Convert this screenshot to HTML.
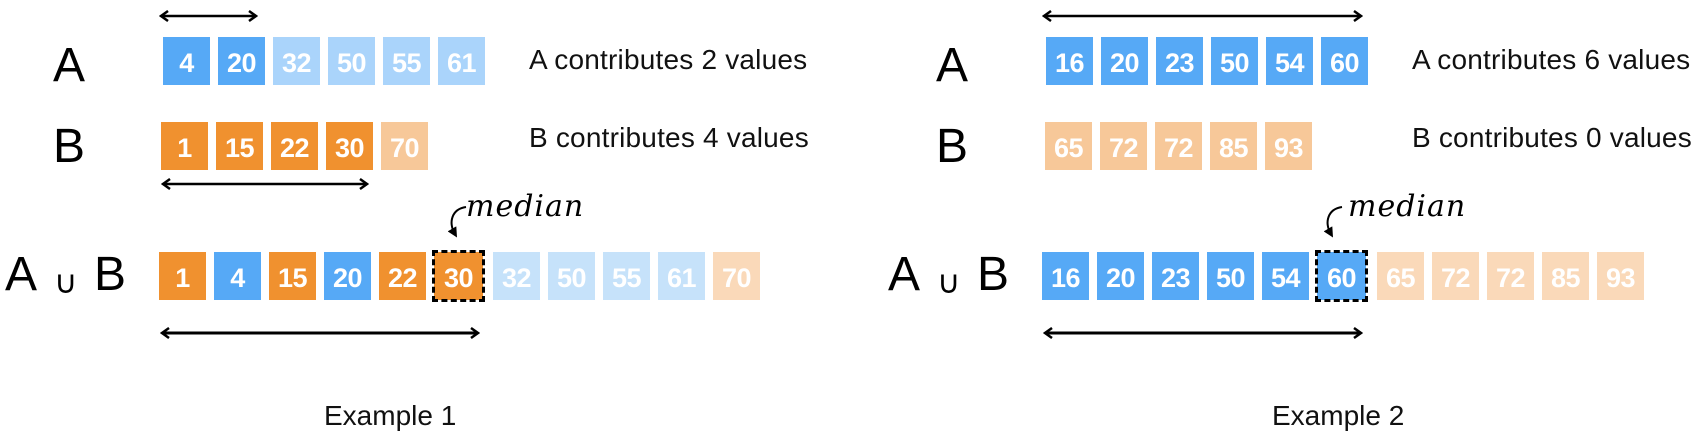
<!DOCTYPE html>
<html><head><meta charset="utf-8"><style>
html,body{margin:0;padding:0;background:#fff;}
body{width:1700px;height:438px;position:relative;overflow:hidden;font-family:"Liberation Sans",sans-serif;}
.b{position:absolute;width:47px;height:48px;color:#fff;font-weight:bold;font-size:27px;line-height:52px;text-align:center;letter-spacing:-0.5px;}
.d{background:#56a9f6}.ld{background:#aad4fb}.lld{background:#c6e2fa}
.o{background:#f0912f}.lo{background:#f7c899}.llo{background:#fad9b9}
.dash{outline:3px dashed #000;outline-offset:-1px;width:49px;}
.lab{position:absolute;font-size:48px;font-weight:normal;color:#000;line-height:1;}
.cup{position:absolute;font-size:32px;line-height:1;}
.txt{position:absolute;font-size:28px;color:#111;line-height:1;letter-spacing:0.2px;}
.med{position:absolute;font-family:"DejaVu Serif",serif;font-style:italic;font-size:30px;line-height:1;letter-spacing:1px;}
.ex{position:absolute;font-size:28px;color:#111;line-height:1;}
svg{position:absolute;left:0;top:0;}
</style></head><body>
<svg width="1700" height="438">
<defs><marker id="h" markerWidth="10" markerHeight="12" refX="8" refY="6" orient="auto-start-reverse" markerUnits="userSpaceOnUse"><path d="M1,1 L8,6 L1,11" fill="none" stroke="#000" stroke-width="2.5"/></marker>
<marker id="t" markerWidth="12" markerHeight="12" refX="6" refY="6" orient="auto" markerUnits="userSpaceOnUse"><path d="M0,1 L10,6 L0,11 Z" fill="#000"/></marker></defs>
<g stroke="#000" stroke-width="2.5" fill="none">
<line x1="161" y1="16" x2="256" y2="16" marker-start="url(#h)" marker-end="url(#h)"/>
<line x1="163" y1="184" x2="367" y2="184" marker-start="url(#h)" marker-end="url(#h)"/>
<line x1="162" y1="333" x2="478" y2="333" stroke-width="3" marker-start="url(#h)" marker-end="url(#h)"/>
<line x1="1044" y1="16" x2="1361" y2="16" marker-start="url(#h)" marker-end="url(#h)"/>
<line x1="1045" y1="333" x2="1361" y2="333" stroke-width="3" marker-start="url(#h)" marker-end="url(#h)"/>
<path d="M466,207 C452,209 448,222 455,234" stroke-width="2" marker-end="url(#t)"/>
<path d="M1342,207 C1328,209 1324,222 1331,234" stroke-width="2" marker-end="url(#t)"/>
</g></svg>

<div class="lab" style="left:53px;top:42px">A</div>
<div class="lab" style="left:53px;top:123px">B</div>
<div class="lab" style="left:5px;top:251px">A</div>
<div class="cup" style="left:54px;top:266px">∪</div>
<div class="lab" style="left:94px;top:251px">B</div>

<div class="txt" style="left:529px;top:46px">A contributes 2 values</div>
<div class="txt" style="left:529px;top:124px">B contributes 4 values</div>

<div class="b d" style="left:163px;top:37px">4</div>
<div class="b d" style="left:218px;top:37px">20</div>
<div class="b ld" style="left:273px;top:37px">32</div>
<div class="b ld" style="left:328px;top:37px">50</div>
<div class="b ld" style="left:383px;top:37px">55</div>
<div class="b ld" style="left:438px;top:37px">61</div>

<div class="b o" style="left:161px;top:122px">1</div>
<div class="b o" style="left:216px;top:122px">15</div>
<div class="b o" style="left:271px;top:122px">22</div>
<div class="b o" style="left:326px;top:122px">30</div>
<div class="b lo" style="left:381px;top:122px">70</div>

<div class="med" style="left:466px;top:192px">median</div>

<div class="b o" style="left:159px;top:252px">1</div>
<div class="b d" style="left:214px;top:252px">4</div>
<div class="b o" style="left:269px;top:252px">15</div>
<div class="b d" style="left:324px;top:252px">20</div>
<div class="b o" style="left:379px;top:252px">22</div>
<div class="b o dash" style="left:434px;top:252px">30</div>
<div class="b lld" style="left:493px;top:252px">32</div>
<div class="b lld" style="left:548px;top:252px">50</div>
<div class="b lld" style="left:603px;top:252px">55</div>
<div class="b lld" style="left:658px;top:252px">61</div>
<div class="b llo" style="left:713px;top:252px">70</div>

<div class="ex" style="left:324px;top:402px">Example 1</div>

<div class="lab" style="left:936px;top:42px">A</div>
<div class="lab" style="left:936px;top:123px">B</div>
<div class="lab" style="left:888px;top:251px">A</div>
<div class="cup" style="left:937px;top:266px">∪</div>
<div class="lab" style="left:977px;top:251px">B</div>

<div class="txt" style="left:1412px;top:46px">A contributes 6 values</div>
<div class="txt" style="left:1412px;top:124px">B contributes 0 values</div>

<div class="b d" style="left:1046px;top:37px">16</div>
<div class="b d" style="left:1101px;top:37px">20</div>
<div class="b d" style="left:1156px;top:37px">23</div>
<div class="b d" style="left:1211px;top:37px">50</div>
<div class="b d" style="left:1266px;top:37px">54</div>
<div class="b d" style="left:1321px;top:37px">60</div>

<div class="b lo" style="left:1045px;top:122px">65</div>
<div class="b lo" style="left:1100px;top:122px">72</div>
<div class="b lo" style="left:1155px;top:122px">72</div>
<div class="b lo" style="left:1210px;top:122px">85</div>
<div class="b lo" style="left:1265px;top:122px">93</div>

<div class="med" style="left:1348px;top:192px">median</div>

<div class="b d" style="left:1042px;top:252px">16</div>
<div class="b d" style="left:1097px;top:252px">20</div>
<div class="b d" style="left:1152px;top:252px">23</div>
<div class="b d" style="left:1207px;top:252px">50</div>
<div class="b d" style="left:1262px;top:252px">54</div>
<div class="b d dash" style="left:1317px;top:252px">60</div>
<div class="b llo" style="left:1377px;top:252px">65</div>
<div class="b llo" style="left:1432px;top:252px">72</div>
<div class="b llo" style="left:1487px;top:252px">72</div>
<div class="b llo" style="left:1542px;top:252px">85</div>
<div class="b llo" style="left:1597px;top:252px">93</div>

<div class="ex" style="left:1272px;top:402px">Example 2</div>
</body></html>
